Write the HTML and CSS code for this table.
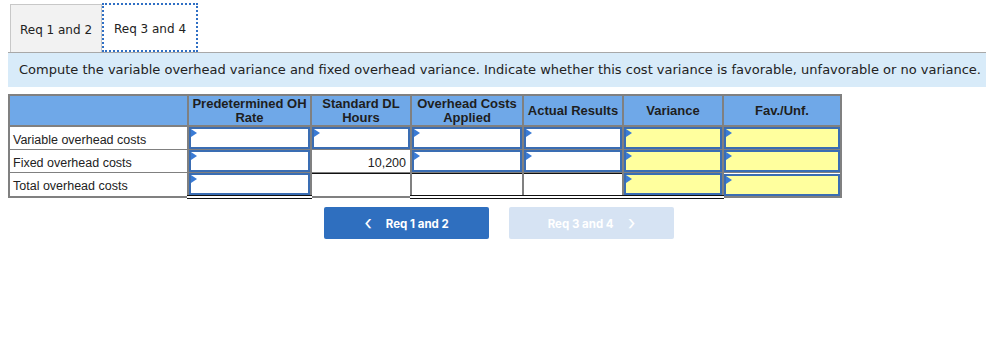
FILE: index.html
```html
<!DOCTYPE html>
<html lang="en">
<head>
  <meta charset="UTF-8" />
  <title>Overhead variances</title>
  <link rel="stylesheet" href="styles.css">
</head>
<body>
  <div class="tabs">
    <div class="tab">Req 1 and 2</div>
    <div class="tab active">Req 3 and 4</div>
  </div>

  <div class="prompt">
    Compute the variable overhead variance and fixed overhead variance. Indicate whether this cost variance is favorable, unfavorable or no variance.
  </div>

  <table class="sheet">
    <colgroup>
      <col style="width:179px">
      <col style="width:123px">
      <col style="width:100px">
      <col style="width:112px">
      <col style="width:100px">
      <col style="width:100px">
      <col style="width:118px">
    </colgroup>
    <thead>
      <tr>
        <th></th>
        <th>Predetermined OH<br>Rate</th>
        <th>Standard DL<br>Hours</th>
        <th>Overhead Costs<br>Applied</th>
        <th>Actual Results</th>
        <th>Variance</th>
        <th>Fav./Unf.</th>
      </tr>
    </thead>
    <tbody>
      <tr>
        <td class="label">Variable overhead costs</td>
        <td><div class="field"></div></td>
        <td><div class="field"></div></td>
        <td><div class="field"></div></td>
        <td><div class="field"></div></td>
        <td><div class="field yellow"></div></td>
        <td><div class="field yellow"></div></td>
      </tr>
      <tr>
        <td class="label">Fixed overhead costs</td>
        <td><div class="field"></div></td>
        <td class="given">10,200</td>
        <td><div class="field"></div></td>
        <td><div class="field"></div></td>
        <td><div class="field yellow"></div></td>
        <td><div class="field yellow"></div></td>
      </tr>
      <tr class="total">
        <td class="label">Total overhead costs</td>
        <td class="sum"><div class="field"></div></td>
        <td class="ruled"></td>
        <td class="sum"></td>
        <td class="sum"></td>
        <td class="sum"><div class="field yellow"></div></td>
        <td><div class="field yellow"></div></td>
      </tr>
    </tbody>
  </table>

  <div class="nav">
    <button class="btn prev"><span class="chev">&lsaquo;</span> Req 1 and 2</button>
    <button class="btn next" disabled>Req 3 and 4 <span class="chev">&rsaquo;</span></button>
  </div>
</body>
</html>
```

FILE: styles.css
```css
body {
  margin: 0;
  padding: 3px 0 0 8px;
  font-family: "DejaVu Sans", Verdana, sans-serif;
  color: #222;
}
.tabs {
  display: flex;
  padding-left: 2px;
  height: 49px;
}
.tab {
  width: 92px;
  box-sizing: border-box;
  display: flex;
  align-items: center;
  justify-content: center;
  font-size: 12px;
  background: #f2f2f2;
  border: 1px solid #c8c8c8;
  border-bottom: none;
  margin-top: 1px;
  padding-top: 2px;
}
.tab.active {
  width: 96px;
  margin-top: 0;
  background: #fff;
  border: 2px dotted #2f6fc4;
}
.prompt {
  background: #d8ebf9;
  border-top: 1px solid #a8a8a8;
  padding: 9px 11px 10px;
  font-size: 13px;
  white-space: nowrap;
  overflow: hidden;
}
.sheet {
  margin-top: 7px;
  border-collapse: collapse;
  table-layout: fixed;
  width: 832px;
  border: 2px solid #808080;
  font-family: "Liberation Sans", Arial, sans-serif;
  font-size: 13px;
}
.sheet th {
  background: #6fa8e8;
  border: 2px solid #808080;
  height: 29px;
  padding: 0;
  font-weight: bold;
  color: #1e1e1e;
  line-height: 14px;
}
.sheet td {
  border: 1px solid #808080;
  border-width: 1px 2px;
  height: 20px;
  padding: 1px;
}
.sheet td.label {
  padding: 3px 3px 0;
  height: 18px;
  font-size: 12.5px;
}
.sheet td.given {
  text-align: right;
  padding: 3px 4px 0 1px;
  height: 18px;
  font-size: 12.5px;
}
.sheet .total td {
  border-bottom: 4px double #111;
}
.sheet .total td:first-child,
.sheet .total td.ruled,
.sheet .total td:last-child {
  border-bottom: 1px solid #808080;
}
.sheet .total td.sum,
.sheet .total td.ruled {
  box-shadow: inset 0 1px 0 #111;
}
.field {
  position: relative;
  height: 18px;
  background: #fff;
  border: 2px solid #3a6db3;
  box-sizing: content-box;
  margin: -1px;
}
.field.yellow {
  background: #ffff9e;
}
/* little corner marker on answer cells */
.field::before {
  content: "";
  position: absolute;
  left: 0;
  top: 0;
  border-left: 6px solid #3a7bd5;
  border-top: 4px solid transparent;
  border-bottom: 4px solid transparent;
}
.nav {
  display: flex;
  gap: 20px;
  margin: 8px 0 0 316px;
}
.btn {
  width: 165px;
  height: 32px;
  padding-top: 3px;
  border: none;
  border-radius: 2px;
  font-family: Inter, Roboto, sans-serif;
  font-weight: bold;
  font-size: 11.5px;
  color: #fff;
  display: flex;
  align-items: center;
  justify-content: center;
  gap: 14px;
}
.btn .chev {
  font-size: 20px;
  font-weight: normal;
  line-height: 1;
  margin-top: -3px;
}
.prev {
  background: #2f6fbf;
}
.next {
  background: #d6e3f3;
  color: #fff;
}
```
